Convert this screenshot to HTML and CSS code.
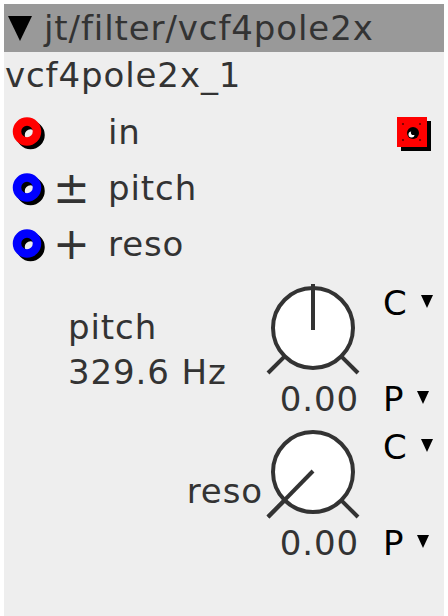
FILE: index.html
```html
<!DOCTYPE html>
<html>
<head>
<meta charset="utf-8">
<link rel="stylesheet" href="styles.css">
</head>
<body>
<div class="node">
  <div class="hdr">
    <svg class="hdr-tri" width="24" height="25" viewBox="0 0 24 25"><polygon points="0,0 24,0 12,25" fill="#000"/></svg>
    <span class="hdr-title">jt/filter/vcf4pole2x</span>
  </div>
  <div class="name">vcf4pole2x_1</div>
  <div class="ports">
    <div class="port">
      <svg class="jack" width="40" height="40" viewBox="0 0 40 40"><circle cx="19.5" cy="23" r="10" fill="none" stroke="#000" stroke-width="8.5"/><circle cx="16" cy="19.5" r="10" fill="none" stroke="#f00" stroke-width="8.5"/></svg>
      <span class="sign"></span>
      <span class="plabel">in</span>
      <svg class="out" width="40" height="40" viewBox="0 0 40 40"><rect x="9" y="9" width="30" height="30" fill="#000"/><rect x="5" y="5" width="30" height="30" fill="#f00"/><circle cx="11" cy="12" r="1.1" fill="#600"/><circle cx="28" cy="12" r="1.1" fill="#600"/><circle cx="11" cy="28" r="1.1" fill="#600"/><circle cx="28" cy="28" r="1.1" fill="#600"/><circle cx="21" cy="21" r="6" fill="#000"/><circle cx="19.5" cy="22.5" r="3" fill="#fff"/><circle cx="21.5" cy="20.5" r="2.6" fill="#000"/></svg>
    </div>
    <div class="port">
      <svg class="jack" width="40" height="40" viewBox="0 0 40 40"><circle cx="19.5" cy="23" r="10" fill="none" stroke="#000" stroke-width="8.5"/><circle cx="16" cy="19.5" r="10" fill="none" stroke="#00f" stroke-width="8.5"/></svg>
      <span class="sign">±</span>
      <span class="plabel">pitch</span>
    </div>
    <div class="port">
      <svg class="jack" width="40" height="40" viewBox="0 0 40 40"><circle cx="19.5" cy="23" r="10" fill="none" stroke="#000" stroke-width="8.5"/><circle cx="16" cy="19.5" r="10" fill="none" stroke="#00f" stroke-width="8.5"/></svg>
      <span class="sign">+</span>
      <span class="plabel">reso</span>
    </div>
  </div>

  <div class="ctl ctl-first">
    <div class="clabel clabel-left"><div>pitch</div><div>329.6 Hz</div></div>
    <div class="knob">
      <svg width="100" height="98" viewBox="0 0 100 98">
        <circle cx="50" cy="48" r="40" fill="#fff" stroke="#333" stroke-width="4"/>
        <line x1="21.7" y1="76.3" x2="5" y2="93" stroke="#333" stroke-width="4"/>
        <line x1="78.3" y1="76.3" x2="95" y2="93" stroke="#333" stroke-width="4"/>
        <line x1="50" y1="50" x2="50" y2="4" stroke="#333" stroke-width="4"/>
      </svg>
      <div class="val">0.00</div>
    </div>
    <div class="sel">
      <div class="opt opt-top">C<svg class="dd" width="12" height="13" viewBox="0 0 12 13"><polygon points="0,0 12,0 6,13" fill="#000"/></svg></div>
      <div class="opt">P<svg class="dd" width="12" height="13" viewBox="0 0 12 13"><polygon points="0,0 12,0 6,13" fill="#000"/></svg></div>
    </div>
  </div>

  <div class="ctl ctl-second">
    <div class="clabel clabel-right">reso</div>
    <div class="knob">
      <svg width="100" height="98" viewBox="0 0 100 98">
        <circle cx="50" cy="48" r="40" fill="#fff" stroke="#333" stroke-width="4"/>
        <line x1="21.7" y1="76.3" x2="5" y2="93" stroke="#333" stroke-width="4"/>
        <line x1="78.3" y1="76.3" x2="95" y2="93" stroke="#333" stroke-width="4"/>
        <line x1="50" y1="47" x2="5" y2="93" stroke="#333" stroke-width="4"/>
      </svg>
      <div class="val">0.00</div>
    </div>
    <div class="sel">
      <div class="opt opt-top">C<svg class="dd" width="12" height="13" viewBox="0 0 12 13"><polygon points="0,0 12,0 6,13" fill="#000"/></svg></div>
      <div class="opt">P<svg class="dd" width="12" height="13" viewBox="0 0 12 13"><polygon points="0,0 12,0 6,13" fill="#000"/></svg></div>
    </div>
  </div>
</div>
</body>
</html>
```

FILE: styles.css
```css
html, body {
  margin: 0;
  padding: 0;
  background: #fff;
}

.node {
  width: 440px;
  height: 612px;
  margin: 4px 0 0 4px;
  background: #eeeeee;
  font-family: "DejaVu Sans", sans-serif;
  font-size: 34px;
  letter-spacing: 0.9px;
  color: #333;
  overflow: hidden;
}

.hdr {
  display: flex;
  align-items: center;
  height: 48px;
  line-height: 48px;
  background: #999999;
  padding-left: 4px;
}

.hdr-tri {
  display: block;
  flex: none;
}

.hdr-title {
  margin-left: 12px;
  color: #333;
}

.name {
  line-height: 47px;
  padding-left: 1px;
}

.ports {
  padding-top: 5px;
}

.port {
  display: flex;
  align-items: center;
  height: 56px;
  line-height: 56px;
}

.jack {
  display: block;
  flex: none;
  margin-left: 7px;
}

.sign {
  flex: none;
  width: 55px;
  padding-left: 2px;
  font-size: 44px;
  letter-spacing: 0;
}

.plabel {
  flex: none;
}

.out {
  display: block;
  flex: none;
  margin-left: auto;
  margin-right: 12px;
}

.ctl {
  display: grid;
  grid-template-columns: 259px 100px 81px;
  height: 140px;
}

.ctl-first {
  margin-top: 8px;
}

.ctl-second {
  margin-top: 4px;
}

.clabel {
  line-height: 45px;
}

.clabel-left {
  align-self: center;
  padding-left: 64px;
}

.clabel-right {
  align-self: start;
  padding-top: 45px;
  text-align: right;
}

.knob {
  display: flex;
  flex-direction: column;
}

.knob svg {
  display: block;
}

.val {
  line-height: 42px;
  text-align: right;
  padding-right: 4px;
}

.sel {
  display: flex;
  flex-direction: column;
  justify-content: space-between;
  padding-left: 20px;
  color: #000;
}

.opt {
  line-height: 42px;
  white-space: nowrap;
}

.opt-top {
  padding-top: 2px;
}

.dd {
  margin-left: 13px;
  vertical-align: 7px;
}
```
